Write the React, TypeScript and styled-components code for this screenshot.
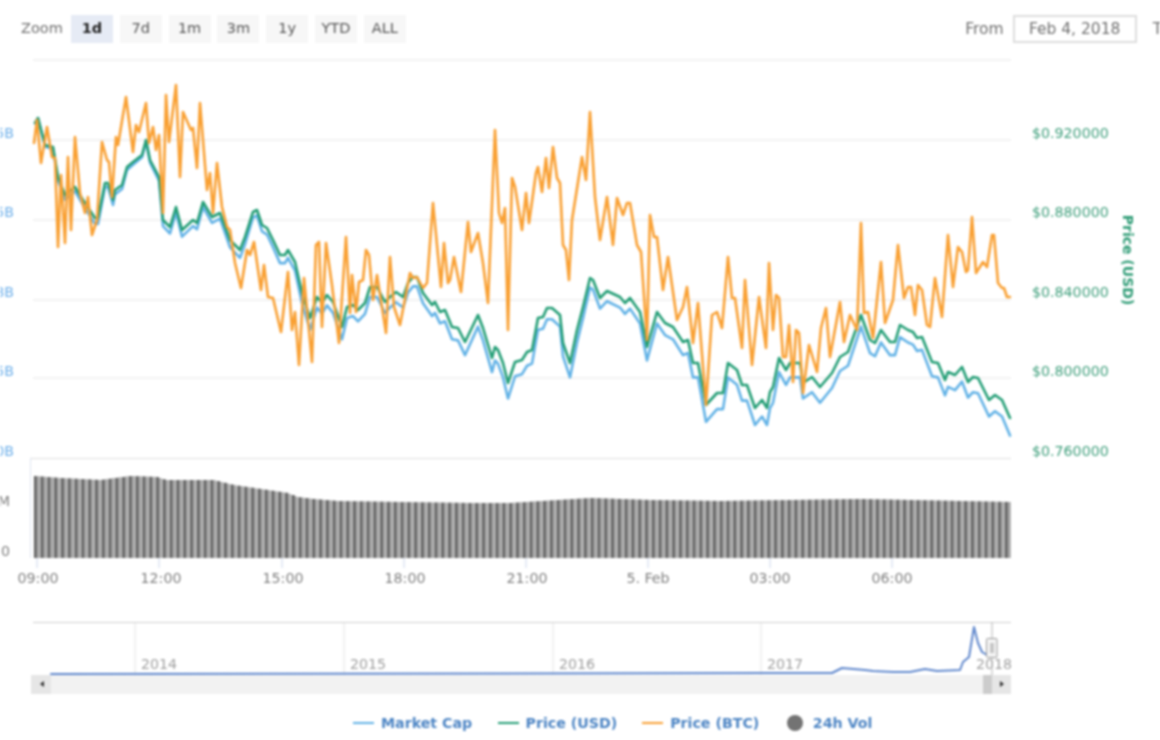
import React from "react";
import styled, { createGlobalStyle } from "styled-components";

const btcLine = [
  34,143,37,120,41,163,47,127,52,157,55,158,58,247,61,175,65,243,68,157,71,230,75,137,80,193,85,213,88,197,92,235,97,220,102,142,107,160,109,162,112,197,116,137,118,145,126,97,133,152,136,125,139,132,146,103,149,143,153,127,156,150,159,135,163,213,166,95,169,142,176,85,180,177,183,112,191,130,193,128,197,168,200,103,207,190,210,173,213,213,217,163,222,207,227,227,230,230,235,263,241,288,247,250,250,255,254,242,261,290,264,265,268,297,273,298,281,332,288,272,292,330,295,312,299,365,304,278,312,362,316,245,319,242,322,327,326,243,332,285,339,343,346,237,350,313,352,275,356,312,359,282,363,280,366,250,369,255,373,300,377,275,386,333,390,257,394,307,400,325,410,273,413,278,417,277,423,288,427,283,433,203,441,287,444,243,448,283,450,280,454,257,461,292,468,222,471,252,478,233,483,263,488,303,495,130,499,213,502,223,505,208,508,330,512,178,515,187,522,230,526,193,529,223,536,173,538,167,542,192,546,158,549,188,553,147,557,178,560,183,563,245,566,250,569,280,572,220,582,157,586,180,590,112,595,197,600,240,607,197,613,245,617,198,623,215,627,203,630,203,637,245,641,252,647,340,650,215,654,237,657,237,663,290,668,257,677,320,683,307,687,287,693,343,698,303,706,405,712,315,717,312,722,328,728,257,732,298,735,298,742,348,745,280,752,365,759,297,766,348,769,263,773,330,776,295,779,298,783,357,786,357,789,325,793,382,796,330,799,333,803,393,809,345,817,372,821,328,826,308,830,357,840,302,844,342,850,315,857,330,861,223,864,313,868,312,873,338,881,262,885,323,893,300,898,245,904,298,908,287,911,287,915,315,918,285,922,290,927,325,930,327,935,278,942,317,948,235,953,287,958,247,962,252,966,272,968,270,972,217,976,273,983,262,987,267,992,235,994,235,998,283,1002,288,1004,288,1007,297,1010,297,
];

const usdLine = [
  35,123,38,118,45,145,53,147,58,177,65,195,75,187,83,200,95,218,98,218,105,183,108,183,113,200,115,190,122,185,127,167,133,162,142,155,146,140,150,160,159,177,163,220,170,227,176,207,182,230,193,220,197,223,203,202,212,217,220,213,230,240,240,250,245,237,253,212,257,210,262,225,267,228,273,240,280,255,285,255,288,250,295,262,302,293,310,318,317,297,322,303,327,295,333,302,342,327,347,307,353,305,358,310,365,303,370,287,377,287,385,302,390,297,396,292,403,297,408,283,413,277,417,277,423,293,432,305,435,302,440,312,445,310,452,327,458,328,465,342,478,315,483,328,492,358,495,347,498,350,503,363,508,383,515,362,522,360,527,352,532,350,538,318,543,317,547,308,552,308,560,315,563,343,570,363,577,330,583,307,590,278,593,280,600,298,607,291,620,297,625,303,630,298,640,312,647,347,657,312,665,323,673,327,683,342,688,340,693,363,698,363,706,405,717,393,723,393,728,363,737,370,742,385,747,385,755,408,762,400,767,408,770,392,773,387,779,358,786,370,790,363,800,363,803,383,812,377,820,387,832,373,840,357,848,352,861,315,870,340,875,343,881,330,890,342,895,342,900,325,908,330,913,332,917,338,922,337,932,362,938,363,945,380,948,372,955,375,962,367,968,382,973,377,978,378,989,400,995,395,1002,400,1010,418,
];

const navLine = [
  51,674,832,673,842,668,865,670,873,671,893,672,910,672,925,669,937,671,960,670,963,662,969,657,974,627,978,643,982,652,987,655,
];

const volProfile = [
  34,476,60,478,100,480,130,476,157,477,165,480,213,480,233,485,267,490,287,493,297,497,313,499,337,501,400,502,470,503,510,503,590,498,650,500,720,501,860,499,1011,502,
];

const toPoints = (flat: number[]) => {
  let out = "";
  for (let i = 0; i < flat.length; i += 2) out += `${flat[i]},${flat[i + 1]} `;
  return out;
};

// market cap follows the usd price on its own axis, it just drifts lower
const capLine = usdLine.map((v, i) => (i % 2 ? v + (v - 115) * 0.058 : v));

const volTop = (x: number) => {
  for (let i = 0; i < volProfile.length - 2; i += 2) {
    if (x <= volProfile[i + 2]) {
      const t = (x - volProfile[i]) / (volProfile[i + 2] - volProfile[i]);
      return volProfile[i + 1] + t * (volProfile[i + 3] - volProfile[i + 1]);
    }
  }
  return 502;
};

const bars = Array.from({ length: 288 }, (_, i) => 34 + i * 3.395);
const volShade = `34,558 ${toPoints(volProfile)}1011,558`;

const ranges = ["1d", "7d", "1m", "3m", "1y", "YTD", "ALL"];
const gridRows = [60, 140, 220, 300, 378];
const capLabels = [
  { y: 138, text: "$7.95B" },
  { y: 217, text: "$7.65B" },
  { y: 297, text: "$7.38B" },
  { y: 376, text: "$7.15B" },
  { y: 456, text: "$6.80B" },
];
const usdLabels = [
  { y: 138, text: "$0.920000" },
  { y: 217, text: "$0.880000" },
  { y: 297, text: "$0.840000" },
  { y: 376, text: "$0.800000" },
  { y: 456, text: "$0.760000" },
];
const timeTicks = [
  { x: 37, label: "09:00", at: 38 },
  { x: 159, label: "12:00", at: 161 },
  { x: 282, label: "15:00", at: 283 },
  { x: 404, label: "18:00", at: 405 },
  { x: 526, label: "21:00", at: 527 },
  { x: 648, label: "5. Feb", at: 648 },
  { x: 770, label: "03:00", at: 770 },
  { x: 892, label: "06:00", at: 892 },
];
const years = [
  { x: 135, label: "2014", grid: true },
  { x: 344, label: "2015", grid: true },
  { x: 553, label: "2016", grid: true },
  { x: 761, label: "2017", grid: true },
  { x: 970, label: "2018", grid: false },
];

const GlobalStyle = createGlobalStyle`
  html, body {
    margin: 0;
    padding: 0;
    background: #fff;
    overflow: hidden;
  }
`;

const Page = styled.div`
  width: 1160px;
  height: 740px;
  overflow: hidden;
  font-family: "DejaVu Sans", sans-serif;
  filter: blur(0.8px);
`;

const Toolbar = styled.div`
  width: 1297px;
  height: 28px;
  padding: 15px 0 0 21px;
  display: flex;
  align-items: center;
  gap: 6.8px;
`;

const ZoomLabel = styled.span`
  font-size: 14.5px;
  color: #6f6f6f;
  width: 43.2px;
  padding-bottom: 2px;
`;

const RangeButton = styled.div<{ $active?: boolean }>`
  box-sizing: border-box;
  width: 42px;
  height: 28px;
  padding-bottom: 2px;
  display: flex;
  align-items: center;
  justify-content: center;
  font-size: 14.5px;
  font-weight: ${(p) => (p.$active ? 700 : 400)};
  color: ${(p) => (p.$active ? "#222" : "#555")};
  background: ${(p) => (p.$active ? "#e6ebf5" : "#f7f7f7")};
`;

const DateGroup = styled.div`
  margin-left: auto;
  display: flex;
  align-items: center;
`;

const DateLabel = styled.span`
  font-size: 15.5px;
  color: #6f6f6f;
  margin-right: 9px;
`;

const DateInput = styled.div`
  box-sizing: border-box;
  width: 124px;
  height: 28px;
  margin-right: 16px;
  border: 2px solid #dedede;
  display: flex;
  align-items: center;
  justify-content: center;
  font-size: 15.5px;
  color: #6f6f6f;
`;

const MainChart = styled.svg`
  display: block;
  width: 1160px;
  height: 550px;
  margin-top: 7px;
`;

const Navigator = styled.svg`
  display: block;
  width: 1160px;
  height: 85px;
  margin-top: 15px;
`;

const GridLine = styled.line`
  stroke: #eeeeee;
  stroke-width: 1.5;
`;

const Series = styled.polyline<{ $color: string }>`
  fill: none;
  stroke: ${(p) => p.$color};
  stroke-width: 2.6;
  stroke-linejoin: round;
  stroke-linecap: round;
`;

const NavSeries = styled(Series)`
  stroke-width: 2;
`;

const AxisText = styled.text<{ $color: string }>`
  font-family: "DejaVu Sans", sans-serif;
  font-size: 14.2px;
  fill: ${(p) => p.$color};
`;

const AxisTitle = styled.text`
  font-family: "DejaVu Sans", sans-serif;
  font-size: 14px;
  font-weight: 700;
  fill: #2f9c76;
`;

const TickLine = styled.line`
  stroke: #ccd6eb;
  stroke-width: 1;
`;

const VolBar = styled.rect<{ $heavy: boolean }>`
  fill: ${(p) => (p.$heavy ? "#5e5e5e" : "#9a9a9a")};
`;

const Legend = styled.div`
  height: 34px;
  padding: 6px 0 0 353px;
  display: grid;
  grid-template-columns: repeat(4, 144.6px);
  align-items: center;
`;

const LegendItem = styled.div`
  display: flex;
  align-items: center;
  font-size: 14.2px;
  font-weight: 700;
  color: #4d85c4;
`;

const LegendDash = styled.span<{ $color: string }>`
  width: 21px;
  height: 2.5px;
  margin-right: 7px;
  background: ${(p) => p.$color};
`;

const LegendDot = styled.span`
  width: 16px;
  height: 16px;
  margin-right: 10px;
  border-radius: 50%;
  background: #737373;
`;

export default function App() {
  return (
    <Page>
      <GlobalStyle />
      <Toolbar>
        <ZoomLabel>Zoom</ZoomLabel>
        {ranges.map((r, i) => (
          <RangeButton key={r} $active={i === 0}>
            {r}
          </RangeButton>
        ))}
        <DateGroup>
          <DateLabel>From</DateLabel>
          <DateInput>Feb 4, 2018</DateInput>
          <DateLabel>To</DateLabel>
          <DateInput>Feb 5, 2018</DateInput>
        </DateGroup>
      </Toolbar>

      <MainChart viewBox="0 50 1160 550">
        {gridRows.map((y) => (
          <GridLine key={y} x1={33} x2={1011} y1={y} y2={y} />
        ))}
        <line x1={30} x2={1011} y1={458.5} y2={458.5} stroke="#e8e8e8" strokeWidth={1.5} />
        <line x1={30.5} x2={30.5} y1={458} y2={558} stroke="#dfe6f2" strokeWidth={1} />

        {capLabels.map((l) => (
          <AxisText key={l.y} x={14} y={l.y} textAnchor="end" $color="#6fb0ea">
            {l.text}
          </AxisText>
        ))}
        {usdLabels.map((l) => (
          <AxisText key={l.y} x={1032} y={l.y} $color="#3f9f7c">
            {l.text}
          </AxisText>
        ))}
        <AxisTitle transform="rotate(90 1123 260)" x={1123} y={260} textAnchor="middle">
          Price (USD)
        </AxisTitle>
        <AxisText x={10} y={506} textAnchor="end" $color="#808080">
          500M
        </AxisText>
        <AxisText x={10} y={556} textAnchor="end" $color="#808080">
          0
        </AxisText>

        <Series points={toPoints(capLine)} $color="#62b2e6" />
        <Series points={toPoints(usdLine)} $color="#249e76" />
        <Series points={toPoints(btcLine)} $color="#f9a033" />

        <polygon points={volShade} fill="#c0c0c0" />
        {bars.map((x, i) => (
          <VolBar
            key={x}
            $heavy={i % 2 === 0}
            x={x}
            y={volTop(x)}
            width={i % 2 === 0 ? 2.6 : 1.6}
            height={558 - volTop(x)}
          />
        ))}

        {timeTicks.map((t) => (
          <g key={t.label}>
            <TickLine x1={t.x} x2={t.x} y1={558} y2={568} />
            <AxisText x={t.at} y={583} textAnchor="middle" $color="#808080">
              {t.label}
            </AxisText>
          </g>
        ))}
      </MainChart>

      <Navigator viewBox="0 615 1160 85">
        {years.map((y) => (
          <g key={y.label}>
            {y.grid && <line x1={y.x} x2={y.x} y1={622} y2={675} stroke="#e4e4e4" strokeWidth={1} />}
            <AxisText x={y.x + 6} y={669} $color="#a0a0a0">
              {y.label}
            </AxisText>
          </g>
        ))}
        <line x1={33} x2={1011} y1={622.5} y2={622.5} stroke="#cfcfcf" strokeWidth={1} />

        <rect x={31} y={675} width={980} height={19} fill="#f2f2f2" />
        <rect x={31} y={675} width={20} height={19} fill="#e6e6e6" />
        <rect x={983} y={675} width={10} height={19} fill="#cccccc" />
        <rect x={992} y={675} width={19} height={19} fill="#e6e6e6" />
        <path d="M44 681v6l-4-3z" fill="#333" />
        <path d="M1000 681v6l4-3z" fill="#333" />

        <NavSeries points={toPoints(navLine)} $color="#5f87cc" />

        <line x1={992} x2={992} y1={622} y2={675} stroke="#b5b5b5" strokeWidth={1} />
        <rect x={986.5} y={638.5} width={10.5} height={19} rx={1} fill="#f4f4f4" stroke="#999" />
        <line x1={991} x2={991} y1={643} y2={653} stroke="#999" />
        <line x1={993} x2={993} y1={643} y2={653} stroke="#999" />
      </Navigator>

      <Legend>
        <LegendItem>
          <LegendDash $color="#62b2e6" />
          Market Cap
        </LegendItem>
        <LegendItem>
          <LegendDash $color="#249e76" />
          Price (USD)
        </LegendItem>
        <LegendItem>
          <LegendDash $color="#f9a033" />
          Price (BTC)
        </LegendItem>
        <LegendItem>
          <LegendDot />
          24h Vol
        </LegendItem>
      </Legend>
    </Page>
  );
}
